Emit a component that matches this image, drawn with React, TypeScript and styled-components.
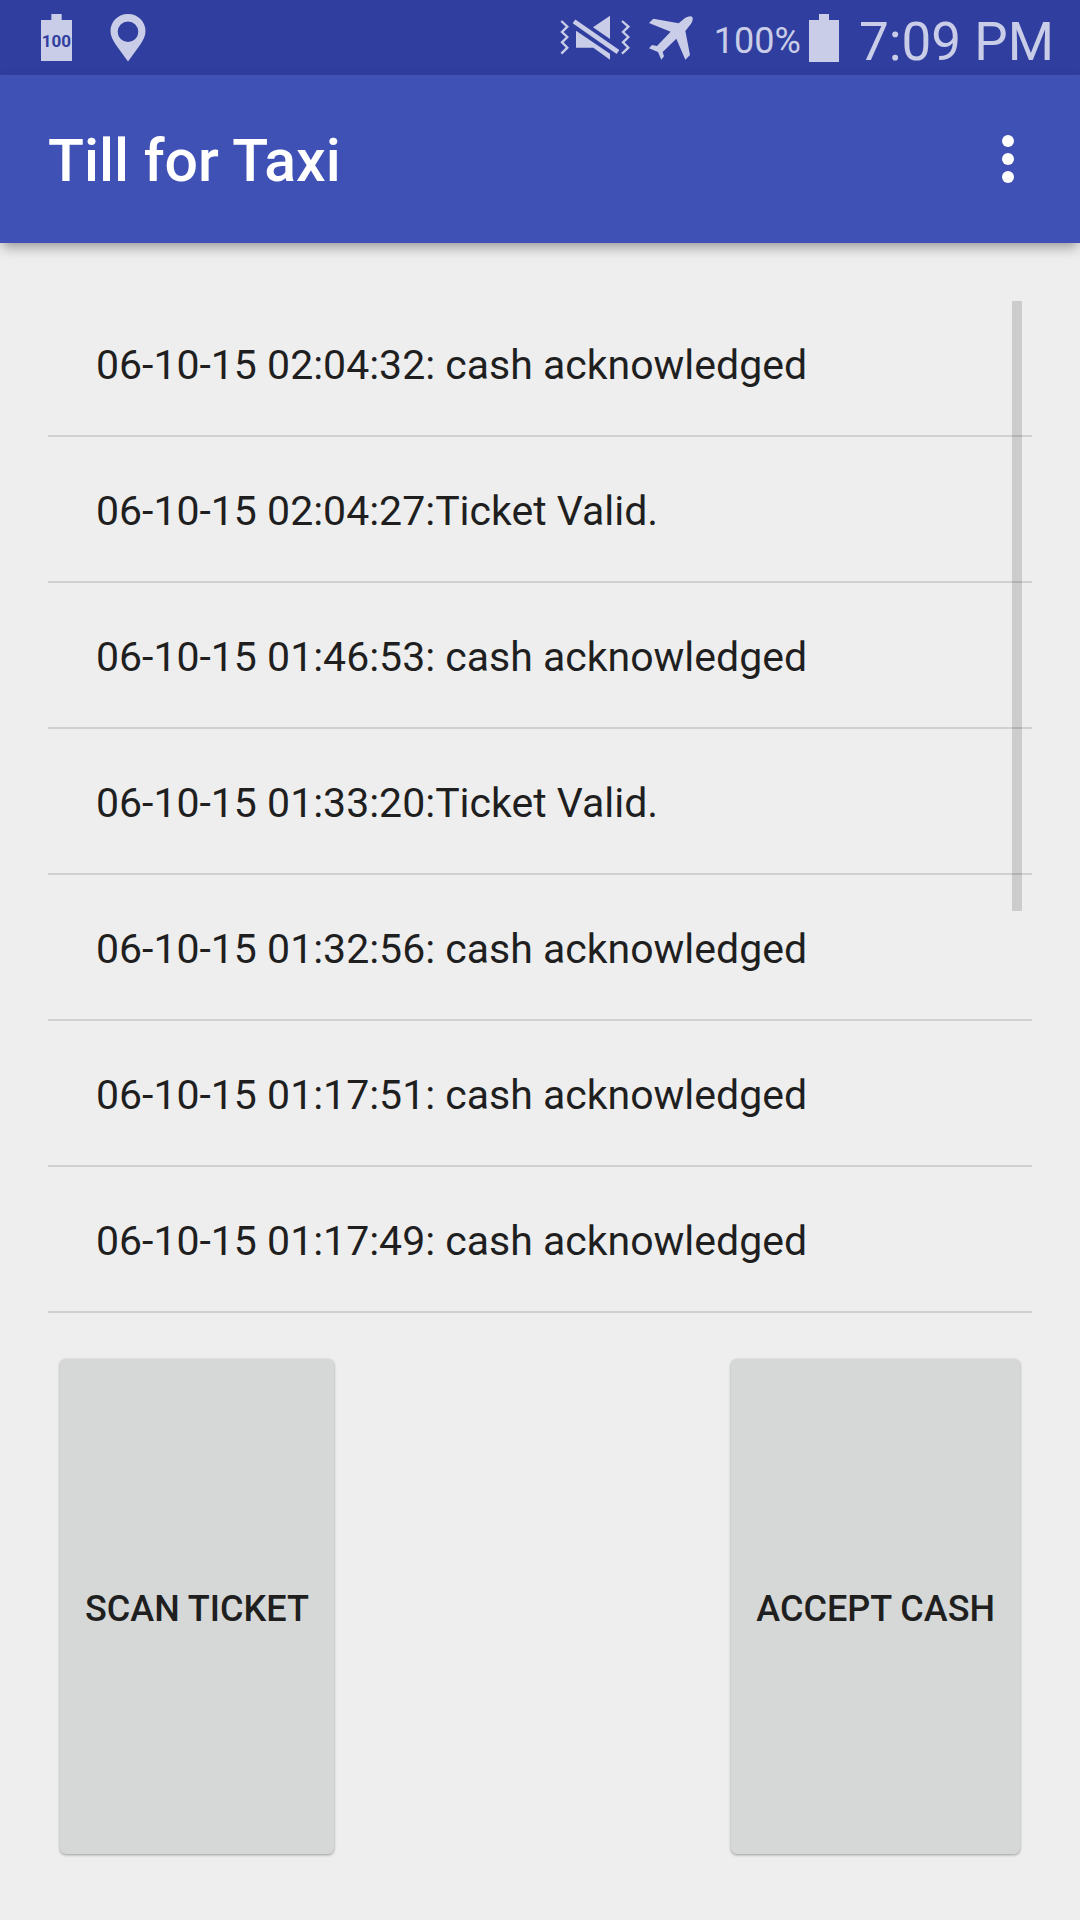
import React from "react";
import styled, { createGlobalStyle } from "styled-components";

const GlobalStyle = createGlobalStyle`
  *, *::before, *::after { box-sizing: border-box; }
  body {
    margin: 0;
    background: #eeeeee;
    color: #1f1f1f;
    font-family: Roboto, "Noto Sans", sans-serif;
  }
`;

const Screen = styled.div`
  display: flex;
  flex-direction: column;
  min-height: 100vh;
`;

const StatusBar = styled.div`
  display: flex;
  justify-content: space-between;
  height: 75px;
  padding: 0 26px 0 41px;
  background: #303f9f;
  color: #c9cde7;
`;

const StatusGroup = styled.div<{ $gap: number }>`
  display: flex;
  align-items: center;
  gap: ${(p) => p.$gap}px;

  svg {
    display: block;
    fill: currentColor;
  }
`;

const BatteryBadge = styled.div`
  display: grid;
  place-items: center;

  > * {
    grid-area: 1 / 1;
  }
`;

const BadgeText = styled.span`
  padding-top: 6px;
  color: #303f9f;
  font-size: 17px;
  font-weight: 700;
  line-height: 20px;
`;

const BatteryLevel = styled.span`
  padding-top: 6px;
  font-size: 36px;
  line-height: 42px;
`;

const Clock = styled.time`
  padding-top: 8px;
  font-size: 53px;
  line-height: 64px;
`;

const AppBar = styled.header`
  display: flex;
  align-items: center;
  justify-content: space-between;
  height: 168px;
  padding: 0 24px 0 48px;
  background: #3f51b5;
  color: #ffffff;
  box-shadow: 0 6px 12px -2px rgba(0, 0, 0, 0.36);
`;

const Title = styled.h1`
  margin: 0;
  padding-top: 4px;
  font-size: 59px;
  font-weight: 500;
  line-height: 70px;
`;

const MenuButton = styled.button`
  display: grid;
  place-items: center;
  width: 96px;
  height: 96px;
  padding: 0;
  border: 0;
  background: none;
  color: inherit;
  cursor: pointer;

  svg {
    fill: currentColor;
  }
`;

const Content = styled.main`
  display: flex;
  flex: 1;
  flex-direction: column;
  padding: 48px;
`;

const LogPanel = styled.section`
  position: relative;
`;

const LogList = styled.ul`
  margin: 0;
  padding: 0;
  list-style: none;
`;

const LogRow = styled.li`
  display: flex;
  align-items: center;
  height: 146px;
  padding: 4px 48px 0;
  border-bottom: 2px solid #d0d0d0;
  font-size: 41px;
  line-height: 50px;
`;

const ScrollThumb = styled.div`
  position: absolute;
  top: 10px;
  right: 10px;
  width: 10px;
  height: 610px;
  background: rgba(0, 0, 0, 0.14);
`;

const Actions = styled.div`
  display: flex;
  flex: 1;
  justify-content: space-between;
  padding: 46px 12px 18px;
`;

const ActionButton = styled.button`
  min-height: 144px;
  padding: 4px 25px 0;
  border: 0;
  border-radius: 6px;
  background: #d6d8d7;
  color: #1f1f1f;
  box-shadow: 0 1px 3px rgba(0, 0, 0, 0.36);
  font: 500 36px/42px Roboto, "Noto Sans", sans-serif;
  text-transform: uppercase;
  cursor: pointer;
`;

const entries = [
  "06-10-15 02:04:32: cash acknowledged",
  "06-10-15 02:04:27:Ticket Valid.",
  "06-10-15 01:46:53: cash acknowledged",
  "06-10-15 01:33:20:Ticket Valid.",
  "06-10-15 01:32:56: cash acknowledged",
  "06-10-15 01:17:51: cash acknowledged",
  "06-10-15 01:17:49: cash acknowledged",
];

const BatteryIcon = ({ width, height }: { width: number; height: number }) => (
  <svg width={width} height={height} viewBox="0 0 30 48" preserveAspectRatio="none" aria-hidden="true">
    <path d="M10 0h10v6h10v42H0V6h10z" />
  </svg>
);

const PinIcon = () => (
  <svg width="36" height="48" viewBox="0 0 36 48" aria-hidden="true">
    <path
      fillRule="evenodd"
      d="M18 0C8 0 .5 7.600.5 17C.5 22 3 26.500 6 31L18 47.500L30 31C33 26.500 35.500 22 35.500 17C35.500 7.600 28 0 18 0ZM18 7.500a10.300 10.300 0 1 1 0 20.600a10.300 10.300 0 1 1 0-20.600z"
    />
  </svg>
);

const MutedVibrateIcon = () => (
  <svg width="70" height="46" viewBox="36 46 210 138" aria-hidden="true">
    <path
      d="M40 64L58 81L42 97L58 112L42 128L58 144L40 162M222 64L241 81L225 97L241 112L225 128L241 144L222 162"
      fill="none"
      stroke="currentColor"
      strokeWidth="7"
    />
    <path d="M78 65L210 157" fill="none" stroke="currentColor" strokeWidth="14" />
    <path d="M186 48V118L135 83ZM84 93V144H136L186 180V162Z" />
  </svg>
);

const AirplaneIcon = () => (
  <svg width="46" height="46" viewBox="300 46 138 138" aria-hidden="true">
    <path d="M303 70L316 57L392 71L412 54Q427 46 433 52Q437 61 428 74L412 94L426 166L412 180L385 117L344 157L348 170L340 180L330 157L303 146L312 136L327 139L368 96Z" />
  </svg>
);

export default function App() {
  return (
    <>
      <GlobalStyle />
      <Screen>
        <StatusBar>
          <StatusGroup $gap={38}>
            <BatteryBadge>
              <BatteryIcon width={31} height={47} />
              <BadgeText>100</BadgeText>
            </BatteryBadge>
            <PinIcon />
          </StatusGroup>
          <StatusGroup $gap={20}>
            <StatusGroup $gap={18}>
              <MutedVibrateIcon />
              <AirplaneIcon />
            </StatusGroup>
            <StatusGroup $gap={8}>
              <BatteryLevel>100%</BatteryLevel>
              <BatteryIcon width={30} height={48} />
            </StatusGroup>
            <Clock dateTime="19:09">7:09 PM</Clock>
          </StatusGroup>
        </StatusBar>
        <AppBar>
          <Title>Till for Taxi</Title>
          <MenuButton type="button" aria-label="More options">
            <svg width="12" height="48" viewBox="0 0 12 48" aria-hidden="true">
              <circle cx="6" cy="6" r="6" />
              <circle cx="6" cy="24" r="6" />
              <circle cx="6" cy="42" r="6" />
            </svg>
          </MenuButton>
        </AppBar>
        <Content>
          <LogPanel aria-label="Activity log">
            <LogList>
              {entries.map((entry) => (
                <LogRow key={entry}>{entry}</LogRow>
              ))}
            </LogList>
            <ScrollThumb />
          </LogPanel>
          <Actions>
            <ActionButton type="button">Scan ticket</ActionButton>
            <ActionButton type="button">Accept cash</ActionButton>
          </Actions>
        </Content>
      </Screen>
    </>
  );
}
